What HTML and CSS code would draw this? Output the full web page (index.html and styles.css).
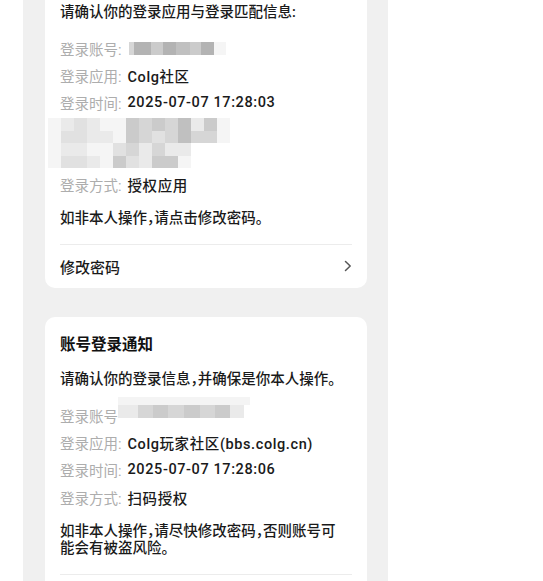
FILE: index.html
```html
<!DOCTYPE html>
<html lang="zh-CN">
<head>
<meta charset="utf-8">
<title>账号登录通知</title>
<link rel="stylesheet" href="styles.css">
</head>
<body>
<div class="panel">
  <section class="card">
    <h2 class="title">账号登录通知</h2>
    <p class="lead">请确认你的登录应用与登录匹配信息:</p>
    <ul class="info">
      <li class="row"><span class="label">登录账号:</span>
        <span class="mask">
          <i class="c w5 g4"></i><i class="c w17 g7"></i><i class="c w12 g5"></i><i class="c w13 g7"></i><i class="c w14 g6"></i><i class="c w11 g5"></i><i class="c w13 g7"></i><i class="c w12 g1"></i>
        </span>
      </li>
      <li class="row"><span class="label">登录应用:</span><span class="value">Colg社区</span></li>
      <li class="row"><span class="label">登录时间:</span><span class="value">2025-07-07 17:28:03</span></li>
      <li class="mosaic">
        <i class="g1"></i><i class="g2"></i><i class="g3"></i><i class="g2"></i><i class="g1"></i><i class="g1"></i><i class="g5"></i><i class="g4"></i><i class="g5"></i><i class="g4"></i><i class="g6"></i><i class="g2"></i><i class="g5"></i><i class="g1"></i>
        <i class="g1"></i><i class="g3"></i><i class="g3"></i><i class="g2"></i><i class="g2"></i><i class="g1"></i><i class="g5"></i><i class="g4"></i><i class="g3"></i><i class="g4"></i><i class="g6"></i><i class="g4"></i><i class="g4"></i><i class="g1"></i>
        <i class="g1"></i><i class="g2"></i><i class="g2"></i><i class="g1"></i><i class="g1"></i><i class="g3"></i><i class="g4"></i><i class="g2"></i><i class="g4"></i><i class="g2"></i><i class="g2"></i><i class="g0"></i><i class="g0"></i><i class="g0"></i>
        <i class="g1"></i><i class="g3"></i><i class="g3"></i><i class="g2"></i><i class="g1"></i><i class="g5"></i><i class="g3"></i><i class="g2"></i><i class="g5"></i><i class="g5"></i><i class="g1"></i><i class="g0"></i><i class="g0"></i><i class="g0"></i>
      </li>
      <li class="row"><span class="label">登录方式:</span><span class="value">授权应用</span></li>
    </ul>
    <p class="warn">如非本人操作，请点击修改密码。</p>
    <a class="link" href="#">
      <span>修改密码</span>
      <svg class="chev" width="8" height="12" viewBox="0 0 8 12"><path d="M1.5 1.5 L6.2 6 L1.5 10.5" fill="none" stroke="#555" stroke-width="1.5" stroke-linecap="round" stroke-linejoin="round"/></svg>
    </a>
  </section>

  <section class="card">
    <h2 class="title">账号登录通知</h2>
    <p class="lead">请确认你的登录信息，并确保是你本人操作。</p>
    <ul class="info">
      <li class="row"><span class="label">登录账号</span>
        <span class="mask2">
          <span class="mask2-top"></span>
          <span class="mask2-bottom">
            <i class="c w20 g2"></i><i class="c w15 g4"></i><i class="c w15 g5"></i><i class="c w16 g4"></i><i class="c w16 g5"></i><i class="c w15 g4"></i><i class="c w15 g5"></i><i class="c w14 g2"></i>
          </span>
        </span>
      </li>
      <li class="row"><span class="label">登录应用:</span><span class="value">Colg玩家社区(bbs.colg.cn)</span></li>
      <li class="row"><span class="label">登录时间:</span><span class="value">2025-07-07 17:28:06</span></li>
      <li class="row"><span class="label">登录方式:</span><span class="value">扫码授权</span></li>
    </ul>
    <p class="warn">如非本人操作，请尽快修改密码，否则账号可能会有被盗风险。</p>
    <a class="link" href="#">
      <span>修改密码</span>
      <svg class="chev" width="8" height="12" viewBox="0 0 8 12"><path d="M1.5 1.5 L6.2 6 L1.5 10.5" fill="none" stroke="#555" stroke-width="1.5" stroke-linecap="round" stroke-linejoin="round"/></svg>
    </a>
  </section>
</div>
</body>
</html>
```

FILE: styles.css
```css
* { box-sizing: border-box; }

html, body {
  margin: 0;
  padding: 0;
  background: #ffffff;
  overflow: hidden;
}

body {
  font-family: Roboto, "Noto Sans CJK SC", "Noto Sans", sans-serif;
  font-feature-settings: "halt";
  color: #1a1a1a;
  font-weight: 500;
}

.panel {
  width: 365px;
  margin: -50px 0 0 23px;
  padding: 0 21px 40px 22px;
  background: #f0f0f0;
  min-height: 800px;
  display: flex;
  flex-direction: column;
  gap: 29.5px;
}

.card {
  background: #ffffff;
  border-radius: 10px;
  padding: 17.5px 15px 0 15px;
}

.title {
  margin: 0;
  font-size: 15.5px;
  line-height: 20px;
  font-weight: 700;
  color: #111;
}

.lead {
  margin: 15.5px 0 0 0;
  font-size: 14.5px;
  line-height: 20px;
  color: #1a1a1a;
}

.info {
  list-style: none;
  margin: 11.5px 0 0 0;
  padding: 0;
}

.row {
  height: 27.25px;
  display: flex;
  align-items: center;
  font-size: 14.5px;
  white-space: nowrap;
}

.label {
  color: #adadad;
  font-weight: 400;
  margin-right: 6px;
}

.value {
  color: #1a1a1a;
  letter-spacing: 0.6px;
}

.mask {
  display: flex;
  height: 13px;
  margin-left: 1px;
}

.c {
  display: block;
  height: 100%;
}

.w5 { width: 5px; }
.w11 { width: 11px; }
.w12 { width: 12px; }
.w13 { width: 13px; }
.w14 { width: 14px; }
.w15 { width: 15px; }
.w16 { width: 16px; }
.w17 { width: 17px; }
.w20 { width: 20px; }

.g0 { background: #ffffff; }
.g1 { background: #f5f5f5; }
.g2 { background: #eaeaea; }
.g3 { background: #e1e1e1; }
.g4 { background: #d6d6d6; }
.g5 { background: #cbcbcb; }
.g6 { background: #c0c0c0; }
.g7 { background: #b3b3b3; }

.mask2 {
  display: flex;
  flex-direction: column;
  margin-top: -15px;
  margin-left: -6px;
}

.mask2-top {
  display: block;
  width: 132px;
  height: 8px;
  background: #f4f4f4;
}

.mask2-bottom {
  display: flex;
  height: 13px;
}

.mosaic {
  height: 55px;
  margin-left: -12px;
  padding-top: 2px;
  display: grid;
  grid-template-columns: repeat(14, 13px);
  grid-auto-rows: 12.5px;
  align-content: start;
}

.mosaic i {
  display: block;
}

.warn {
  margin: 11.75px 0 0 0;
  padding-right: 6px;
  font-size: 14.5px;
  line-height: 17.5px;
  color: #1a1a1a;
}

.link {
  margin-top: 16px;
  border-top: 1px solid #ececec;
  height: 44px;
  display: flex;
  align-items: center;
  justify-content: space-between;
  text-decoration: none;
  color: #1a1a1a;
  font-size: 15px;
}

.chev {
  display: block;
}
```
